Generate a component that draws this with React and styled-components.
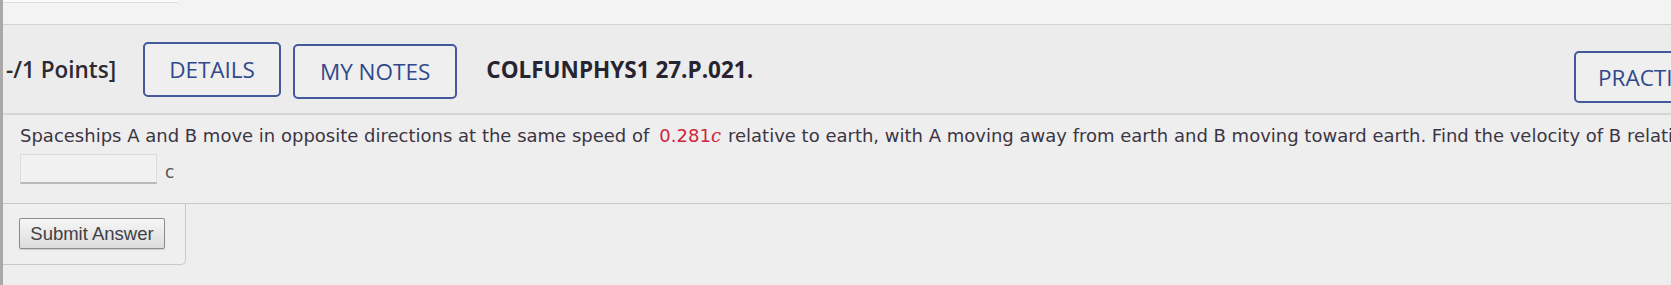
import styled, { createGlobalStyle } from "styled-components"

const Global = createGlobalStyle`
  html, body {
    margin: 0;
    padding: 0;
    background: #ececec;
  }
  * {
    box-sizing: border-box;
  }
`

const Page = styled.div`
  width: 1671px;
  height: 285px;
  overflow: hidden;
  background: #eeeeee;
  border-left: 3px solid #a9a9a9;
  display: flex;
  flex-direction: column;
`

const TopStrip = styled.div`
  height: 25px;
  flex-shrink: 0;
  background: #f3f3f3;
  border-bottom: 1px solid #d2d2d2;

  .tab {
    width: 175px;
    height: 3px;
    background: #fafafa;
    border-bottom: 1px solid #dedede;
  }
`

const Header = styled.div`
  height: 90px;
  flex-shrink: 0;
  display: flex;
  align-items: center;
  padding-left: 3px;
  background: #ececec;
  border-bottom: 2px solid #d6d6d6;
  font-family: "Open Sans", "Noto Sans", sans-serif;
  white-space: nowrap;
`

const LeftGroup = styled.div`
  width: 1568px;
  flex-shrink: 0;
  display: flex;
  align-items: center;
`

const Points = styled.span`
  font-size: 22.5px;
  font-weight: 600;
  color: #2c2a33;
  margin-right: 27px;
`

const OutlineButton = styled.button`
  flex-shrink: 0;
  height: ${(p) => p.h || 55}px;
  padding: 0 ${(p) => p.px || 24}px;
  margin-left: ${(p) => p.ml || 0}px;
  margin-top: ${(p) => p.mt || 0}px;
  background: #efefef;
  border: 2px solid #44589c;
  border-radius: 5px;
  color: #30498a;
  font-family: "Open Sans", "Noto Sans", sans-serif;
  font-size: 22.5px;
  font-weight: 500;
`

const Code = styled.span`
  margin-left: 29px;
  font-size: 22.5px;
  font-weight: 700;
  color: #272430;
  flex-shrink: 0;
`

const Body = styled.div`
  padding: 10px 0 0 17px;
  font-family: "DejaVu Sans", Verdana, sans-serif;
  color: #3c3543;
`

const Question = styled.p`
  margin: 0;
  font-size: 18px;
  line-height: 22px;
  white-space: nowrap;
`

const Given = styled.span`
  color: #d0253c;
  margin: 0 7px 0 10px;

  i {
    font-style: italic;
    font-family: "DejaVu Serif", serif;
  }
`

const AnswerRow = styled.div`
  display: flex;
  align-items: center;
  gap: 8px;
  margin-top: 7px;
  height: 30px;
`

const Input = styled.div`
  width: 137px;
  height: 30px;
  background: #f1f1f1;
  border: 1px solid #dcdcdc;
  border-bottom: 2px solid #b9b9b9;
`

const Unit = styled.span`
  font-size: 17px;
  color: #555;
  margin-top: 6px;
`

const SubmitArea = styled.div`
  margin-top: 19px;
  height: 62px;
  border-top: 1px solid #cacaca;
  display: flex;
  flex-shrink: 0;
`

const SubmitBox = styled.div`
  width: 183px;
  height: 61px;
  padding: 14px 0 0 16px;
  border-right: 1px solid #c9c9c9;
  border-bottom: 1px solid #c9c9c9;
  border-bottom-right-radius: 5px;
  background: #efefef;
`

const SubmitButton = styled.button`
  width: 146px;
  height: 31px;
  padding: 0;
  border: 1px solid #8d8d8d;
  border-radius: 2px;
  background: linear-gradient(#f6f6f6, #dcdcdc);
  box-shadow: 0 1px 1px rgba(0, 0, 0, 0.15);
  font-family: "Liberation Sans", Arial, sans-serif;
  font-size: 18.5px;
  color: #3f3f46;
`

const BottomLine = styled.div`
  margin-top: 22px;
  height: 6px;
  border-top: 2px solid #cfcfcf;
  background: #e3e3e3;
`

export default function App() {
  return (
    <>
      <Global />
      <Page>
        <TopStrip>
          <div className="tab" />
        </TopStrip>
        <Header>
          <LeftGroup>
            <Points>-/1 Points]</Points>
            <OutlineButton px={24}>DETAILS</OutlineButton>
            <OutlineButton ml={12} mt={5} px={25}>
              MY NOTES
            </OutlineButton>
            <Code>COLFUNPHYS1 27.P.021.</Code>
          </LeftGroup>
          <OutlineButton mt={16} h={52} px={22}>
            PRACTICE ANOTHER
          </OutlineButton>
        </Header>
        <Body>
          <Question>
            Spaceships A and B move in opposite directions at the same speed
            of
            <Given>
              0.281<i>c</i>
            </Given>
            relative to earth, with A moving away from earth and B moving
            toward earth. Find the velocity of B relative to A.
          </Question>
          <AnswerRow>
            <Input />
            <Unit>c</Unit>
          </AnswerRow>
        </Body>
        <SubmitArea>
          <SubmitBox>
            <SubmitButton>Submit Answer</SubmitButton>
          </SubmitBox>
        </SubmitArea>
        <BottomLine />
      </Page>
    </>
  )
}
